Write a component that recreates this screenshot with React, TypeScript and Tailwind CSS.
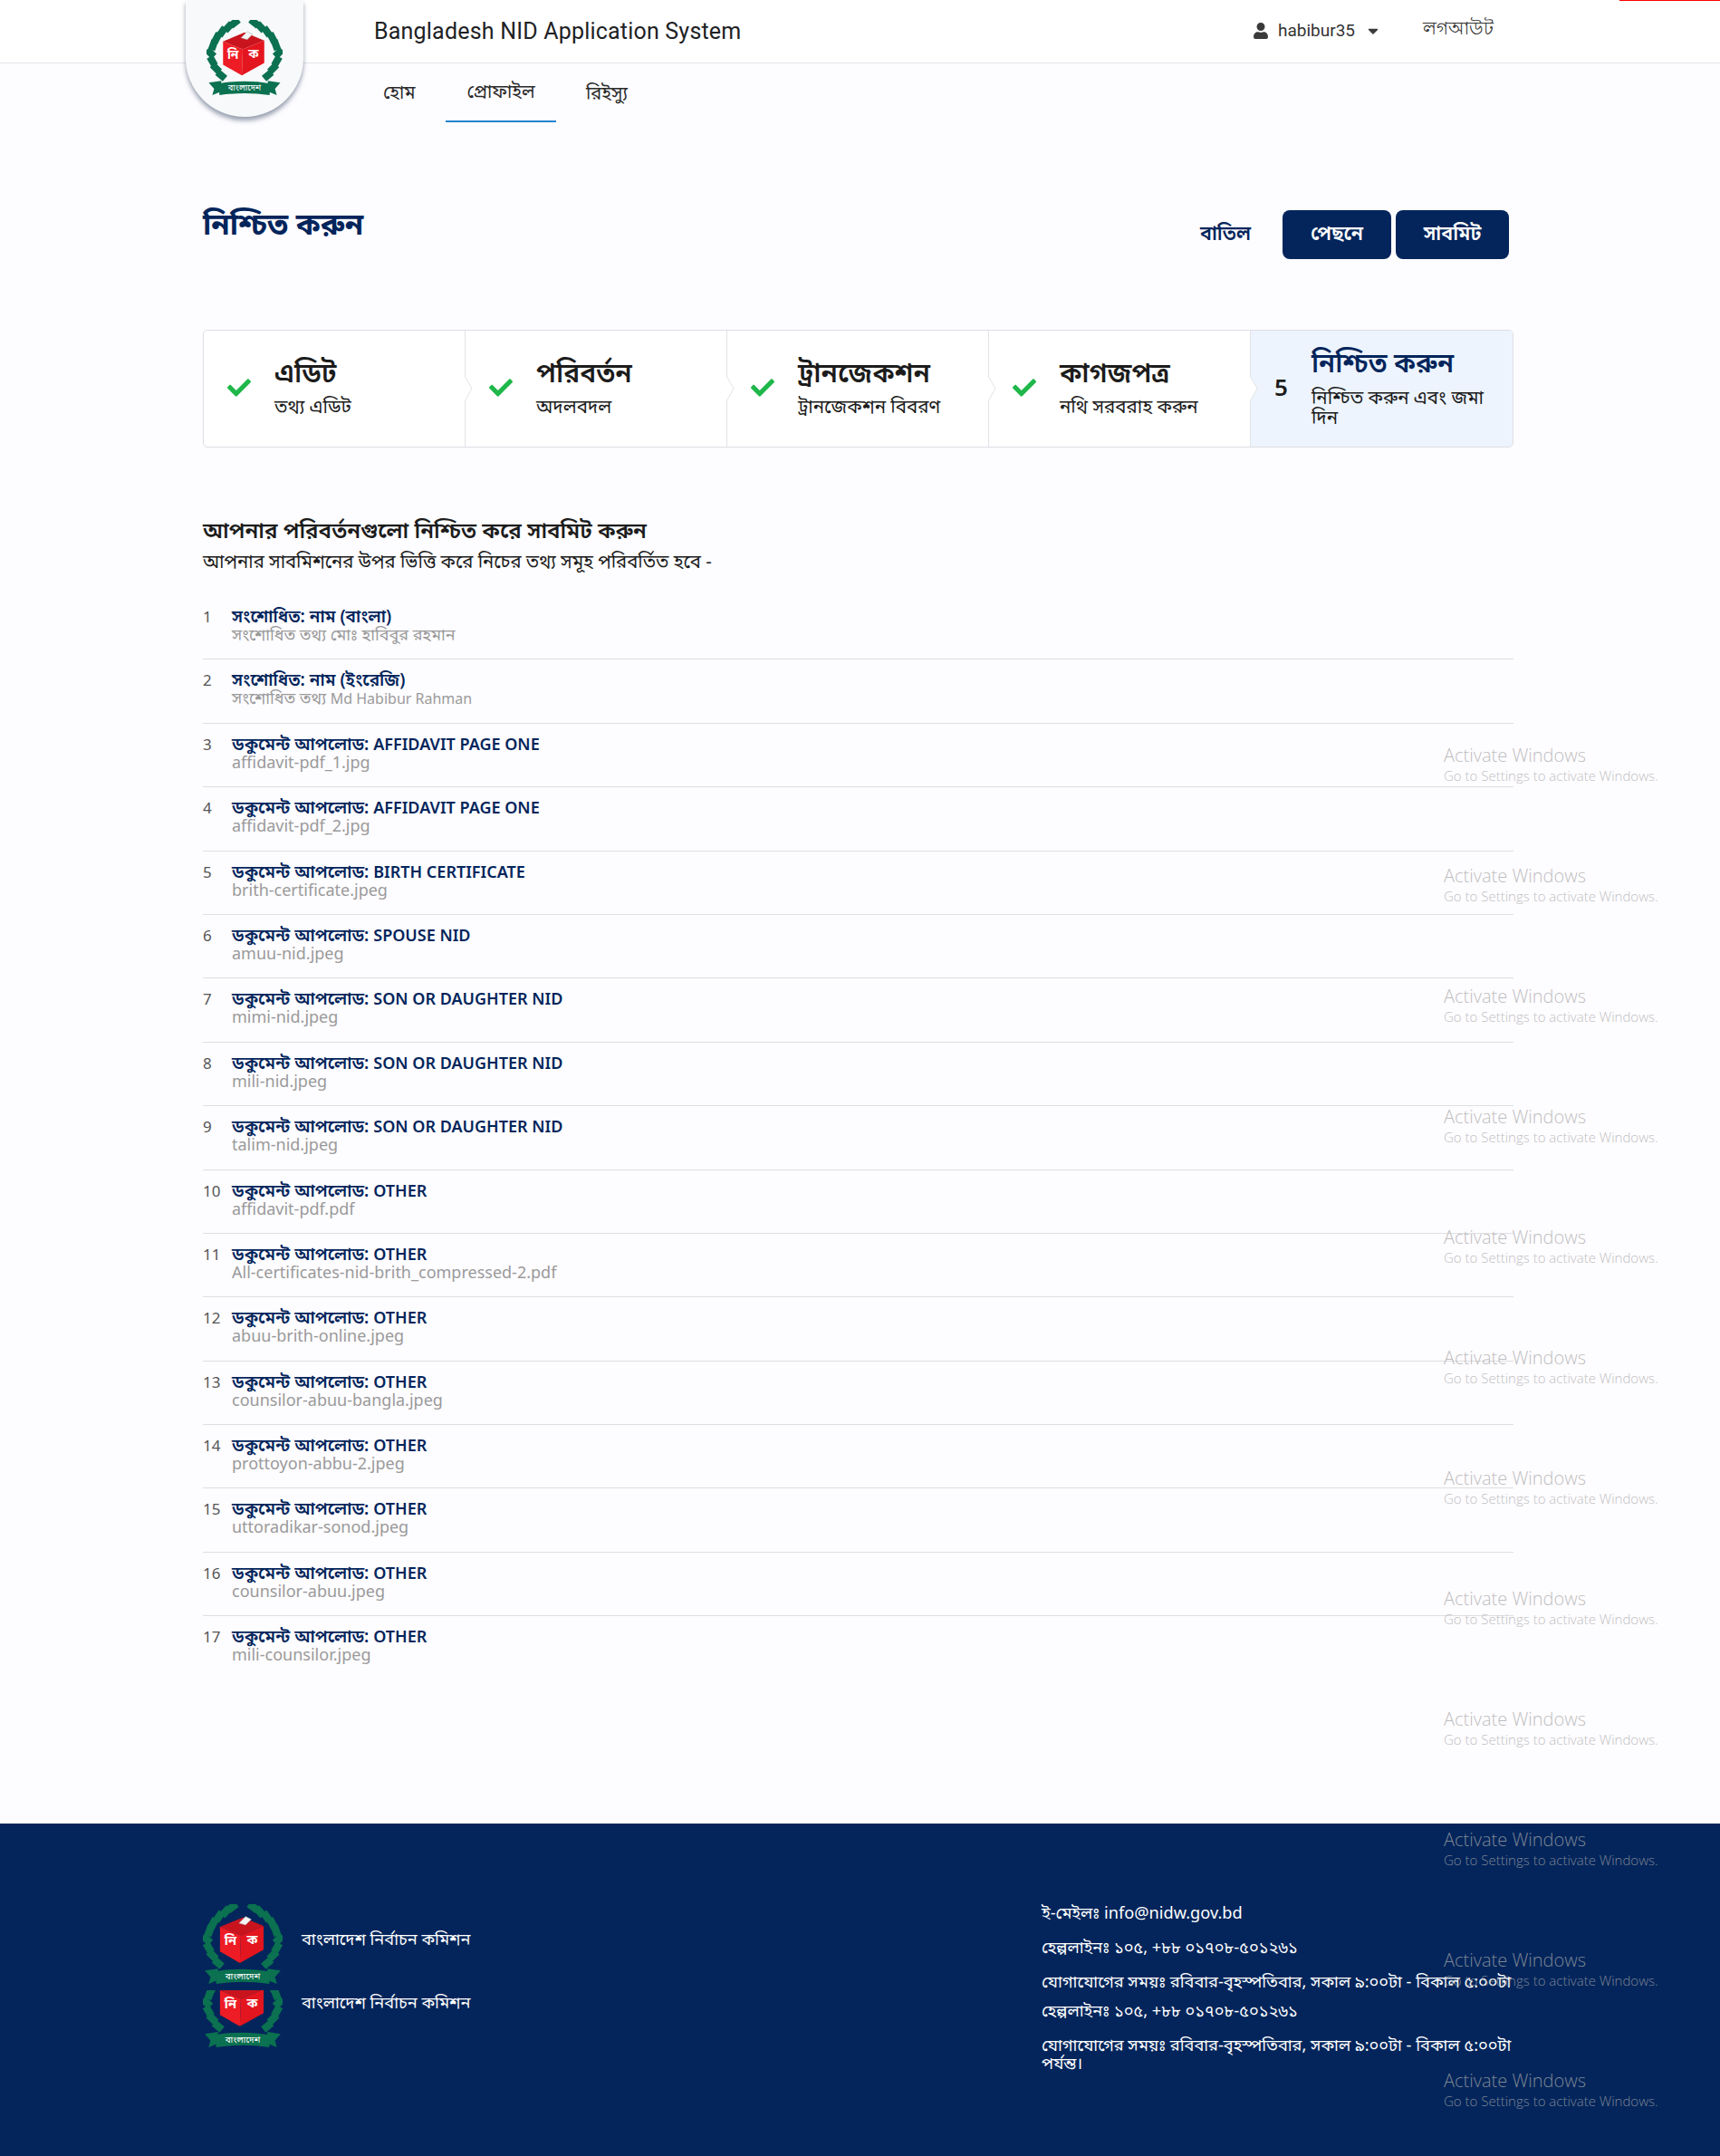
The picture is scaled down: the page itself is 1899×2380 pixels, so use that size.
import React from "react";
import { FaCaretDown, FaCheck, FaUser } from "react-icons/fa";

type Step = { title: string; sub: string };
type Row = { prefix: string; title: string; sub: string; latin?: string };

const steps: Step[] = [
  { title: "এডিট", sub: "তথ্য এডিট" },
  { title: "পরিবর্তন", sub: "অদলবদল" },
  { title: "ট্রানজেকশন", sub: "ট্রানজেকশন বিবরণ" },
  { title: "কাগজপত্র", sub: "নথি সরবরাহ করুন" },
];

const upload = "ডকুমেন্ট আপলোড: ";

const rows: Row[] = [
  { prefix: "সংশোধিত: নাম (বাংলা)", title: "", sub: "সংশোধিত তথ্য মোঃ হাবিবুর রহমান" },
  { prefix: "সংশোধিত: নাম (ইংরেজি)", title: "", sub: "সংশোধিত তথ্য ", latin: "Md Habibur Rahman" },
  { prefix: upload, title: "AFFIDAVIT PAGE ONE", sub: "affidavit-pdf_1.jpg" },
  { prefix: upload, title: "AFFIDAVIT PAGE ONE", sub: "affidavit-pdf_2.jpg" },
  { prefix: upload, title: "BIRTH CERTIFICATE", sub: "brith-certificate.jpeg" },
  { prefix: upload, title: "SPOUSE NID", sub: "amuu-nid.jpeg" },
  { prefix: upload, title: "SON OR DAUGHTER NID", sub: "mimi-nid.jpeg" },
  { prefix: upload, title: "SON OR DAUGHTER NID", sub: "mili-nid.jpeg" },
  { prefix: upload, title: "SON OR DAUGHTER NID", sub: "talim-nid.jpeg" },
  { prefix: upload, title: "OTHER", sub: "affidavit-pdf.pdf" },
  { prefix: upload, title: "OTHER", sub: "All-certificates-nid-brith_compressed-2.pdf" },
  { prefix: upload, title: "OTHER", sub: "abuu-brith-online.jpeg" },
  { prefix: upload, title: "OTHER", sub: "counsilor-abuu-bangla.jpeg" },
  { prefix: upload, title: "OTHER", sub: "prottoyon-abbu-2.jpeg" },
  { prefix: upload, title: "OTHER", sub: "uttoradikar-sonod.jpeg" },
  { prefix: upload, title: "OTHER", sub: "counsilor-abuu.jpeg" },
  { prefix: upload, title: "OTHER", sub: "mili-counsilor.jpeg" },
];

const hours = "যোগাযোগের সময়ঃ রবিবার-বৃহস্পতিবার, সকাল ৯:০০টা - বিকাল ৫:০০টা";

// leaves of the wreath, left side; the right side is mirrored
const leaves: [number, number, number][] = [
  [31, 3, -38],
  [24, 8, -48],
  [17, 13, -55],
  [11, 20, -62],
  [7, 28, -70],
  [4, 37, 45],
  [6, 46, 60],
  [10, 54, 45],
  [16, 62, 40],
];

function Emblem({ className, viewBox = "0 0 84 86" }: { className?: string; viewBox?: string }) {
  return (
    <svg viewBox={viewBox} className={className}>
      {[false, true].map((flip) => (
        <g key={String(flip)} transform={flip ? "translate(84 0) scale(-1 1)" : undefined}>
          {leaves.map(([x, y, r]) => (
            <rect key={x + "-" + y} x={x - 5.5} y={y - 4} width="11" height="8" fill="#0b7150" transform={`rotate(${r} ${x} ${y})`} />
          ))}
        </g>
      ))}
      <path d="M18 24 L42 14 L64 23 L40 33 Z" fill="#c9141e" />
      <path d="M18 24 L40 33 L39 62 L18 50 Z" fill="#ee1c25" />
      <path d="M40 33 L64 23 L64 48 L39 62 Z" fill="#e3151e" />
      <path d="M38 20 L45 13 L51 16 L45 22 Z" fill="#f4f4f4" stroke="#999" strokeWidth="0.4" />
      <text x="29" y="43" fontSize="14" fill="#fff" textAnchor="middle" fontWeight="700">নি</text>
      <text x="52" y="42" fontSize="14" fill="#fff" textAnchor="middle" fontWeight="700">ক</text>
      <path d="M2 70 L16 68 L16 80 L6 84 L8 77 Z" fill="#0b7150" />
      <path d="M82 70 L68 68 L68 80 L78 84 L76 77 Z" fill="#0b7150" />
      <path d="M13 71 Q42 66 71 71 L70 84 Q42 80 14 84 Z" fill="#0b7150" />
      <text x="42" y="79" fontSize="9.5" fill="#fff" textAnchor="middle">বাংলাদেশ</text>
    </svg>
  );
}

function Watermarks() {
  return (
    <div className="pointer-events-none absolute left-[1594px] top-[820px] flex flex-col gap-[86px] font-['Open_Sans',sans-serif] font-light text-[#a8a8a8]/75">
      {Array.from({ length: 12 }).map((_, i) => (
        <div key={i} className="h-[47px]">
          <div className="text-[20px] leading-[28px]">Activate Windows</div>
          <div className="text-[15px] leading-[17px]">Go to Settings to activate Windows.</div>
        </div>
      ))}
    </div>
  );
}

function Chevron() {
  return (
    <svg viewBox="0 0 9 28" className="absolute -right-[9px] top-[50px] z-10 h-[28px] w-[9px]">
      <path d="M0 0 L8 14 L0 28 Z" fill="#ffffff" />
      <path d="M0 0 L8 14 L0 28" fill="none" stroke="#e2e3e6" strokeWidth="1" />
    </svg>
  );
}

export default function App() {
  return (
    <div className="relative h-[2380px] overflow-hidden bg-[#fdfcff] font-['Noto_Sans','Noto_Sans_Bengali',sans-serif] text-[#1c1c1c]">
      <header className="relative flex h-[70px] items-center border-b border-[#e3e3e6] bg-white pl-[413px] font-['Roboto',sans-serif]">
        <div className="absolute right-0 top-0 h-px w-[111px] bg-[#ff0000]" />
        <span className="text-[25px] leading-8 tracking-[0.2px] text-[#202124]">Bangladesh NID Application System</span>
        <div className="absolute left-[1383px] top-[22px] flex items-center text-[19px] text-[#333]">
          <FaUser className="h-[18px] w-[18px] text-[#3a3a3a]" />
          <span className="ml-[10px] leading-[24px]">habibur35</span>
          <FaCaretDown className="ml-[11px] h-[18px] w-[18px] text-[#3a3a3a]" />
        </div>
        <span className="absolute left-[1571px] top-[18px] text-[20px] leading-[26px] text-[#333]">লগআউট</span>
      </header>

      <div className="absolute left-[205px] top-0 z-20 flex h-[129px] w-[130px] items-start justify-center rounded-b-[65px] bg-[#f8f9fa] pt-[22px] shadow-[0_4px_5px_rgba(70,85,110,0.55)]">
        <Emblem className="h-[85px] w-[84px]" />
      </div>

      <nav className="flex h-[64px] pl-[492px] text-[20px] text-[#2a2a2a]">
        <span className="absolute left-[423px] top-[89px] leading-[26px]">হোম</span>
        <span className="flex h-[65px] w-[122px] justify-center border-b-2 border-[#2185d0] pt-[18px] leading-[26px]">প্রোফাইল</span>
        <span className="ml-[33px] pt-[20px] leading-[26px]">রিইস্যু</span>
      </nav>

      <main className="mx-[224px] w-[1447px]">
        <div className="mt-[98px] flex h-[54px] items-start justify-between pr-[5px]">
          <h1 className="mt-[-6px] text-[33px] font-bold leading-[42px] text-[#03255b]">নিশ্চিত করুন</h1>
          <div className="flex items-center">
            <span className="mr-[35px] mt-[-3px] text-[21.5px] font-semibold text-[#03255b]">বাতিল</span>
            <button className="mr-[5px] h-[54px] w-[120px] rounded-[8px] bg-[#03255b] pb-[3px] text-[21.5px] font-semibold text-white">পেছনে</button>
            <button className="h-[54px] w-[125px] rounded-[8px] bg-[#03255b] pb-[3px] text-[21.5px] font-semibold text-white">সাবমিট</button>
          </div>
        </div>

        <div className="mt-[78px] grid h-[130px] grid-cols-5 overflow-hidden rounded-[5px] border border-[#dedfe3] bg-white">
          {steps.map((s) => (
            <div key={s.title} className="relative flex items-center border-r border-[#e2e3e6] pl-[26px]">
              <FaCheck className="mb-[2px] h-[26px] w-[26px] text-[#1fb74a]" />
              <div className="ml-[26px] pb-[6px]">
                <div className="text-[30px] font-semibold leading-[36px]">{s.title}</div>
                <div className="mt-[7px] text-[20.5px] leading-[24px]">{s.sub}</div>
              </div>
              <Chevron />
            </div>
          ))}
          <div className="flex items-center bg-[#edf4fd] pl-[26px]">
            <span className="pb-[3px] text-[26px] font-semibold">5</span>
            <div className="ml-[26px] pb-[6px] pr-[26px]">
              <div className="text-[29.5px] font-semibold leading-[36px] text-[#03255b]">নিশ্চিত করুন</div>
              <div className="mt-[9px] text-[20.5px] leading-[22px]">নিশ্চিত করুন এবং জমা দিন</div>
            </div>
          </div>
        </div>

        <h2 className="mt-[74px] text-[24.2px] font-semibold leading-[34px]">আপনার পরিবর্তনগুলো নিশ্চিত করে সাবমিট করুন</h2>
        <p className="text-[20.3px] leading-[34px]">আপনার সাবমিশনের উপর ভিত্তি করে নিচের তথ্য সমূহ পরিবর্তিত হবে -</p>

        <div className="mt-[22px]">
          {rows.map((r, i) => (
            <div key={i} className="flex h-[70.4px] border-b border-[#dedfe2] pt-[12px] last:border-b-0">
              <span className="w-[32px] text-[17px] leading-[22px] text-[#555]">{i + 1}</span>
              <div>
                <div className="text-[19px] font-semibold leading-[20px] text-[#03255b]">
                  {r.prefix}
                  <span className="text-[18px]">{r.title}</span>
                </div>
                <div className="text-[18px] leading-[20px] text-[#9a9a9a]">
                  {r.sub}
                  {r.latin ? <span className="text-[16px]">{r.latin}</span> : null}
                </div>
              </div>
            </div>
          ))}
        </div>
      </main>

      <footer className="absolute inset-x-0 bottom-0 flex h-[367px] bg-[#03255b] pl-[224px] text-white">
        <div className="w-[926px] pt-[89px]">
          <div className="flex h-[70px] items-start">
            <Emblem className="h-[90px] w-[88px] shrink-0" />
            <span className="ml-[21px] mt-[25px] text-[18.2px] leading-[26px]">বাংলাদেশ নির্বাচন কমিশন</span>
          </div>
          <div className="mt-[25px] flex h-[70px] items-start">
            <Emblem className="h-[65px] w-[88px] shrink-0" viewBox="0 24 84 62" />
            <span className="ml-[21px] mt-[0px] text-[18.2px] leading-[26px]">বাংলাদেশ নির্বাচন কমিশন</span>
          </div>
        </div>
        <div className="w-[521px] pt-[88px] text-[18.2px] leading-[20px]">
          <p>ই-মেইলঃ info@nidw.gov.bd</p>
          <p className="mt-[18px]">হেল্পলাইনঃ ১০৫, +৮৮ ০১৭০৮-৫০১২৬১</p>
          <p className="mt-[18px] whitespace-nowrap">{hours}</p>
          <p className="mt-[12px]">হেল্পলাইনঃ ১০৫, +৮৮ ০১৭০৮-৫০১২৬১</p>
          <p className="mt-[18px]">{hours} পর্যন্ত।</p>
        </div>
      </footer>

      <Watermarks />
    </div>
  );
}
